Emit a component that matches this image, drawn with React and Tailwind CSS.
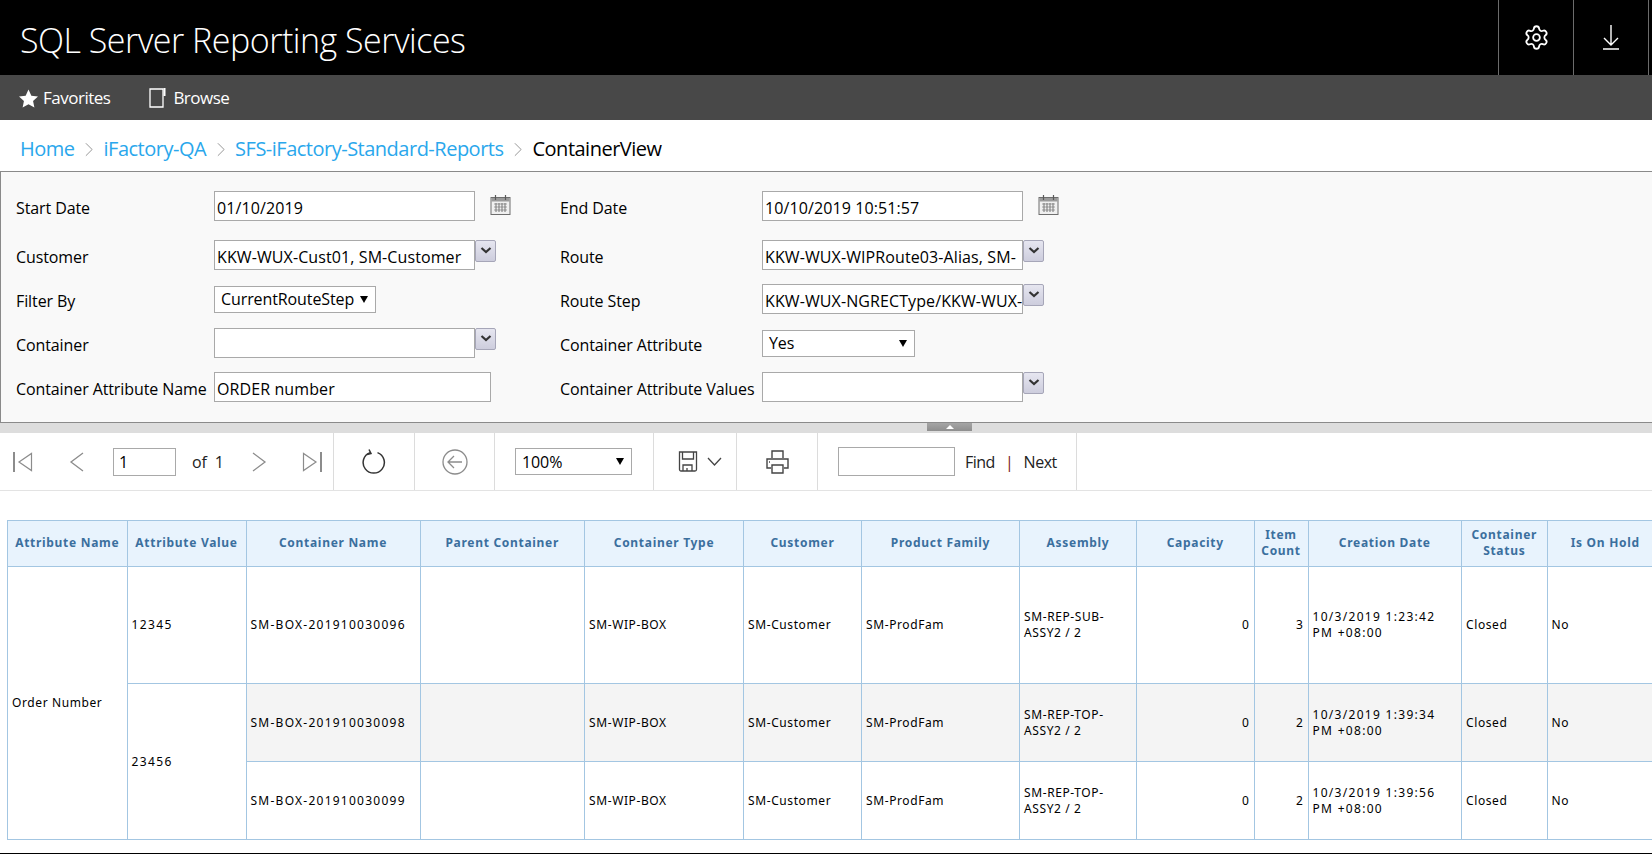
import React from 'react';
import { Settings } from 'lucide-react';

const cols = [119.5, 119, 174, 164.5, 159, 118, 158, 117, 117.5, 54, 153.5, 85.5, 116.5];

const rows = [
  { name: 'SM-BOX-201910030096', asm: 'SM-REP-SUB-', count: 3, date: '10/3/2019 1:23:42', h: 'h-[117px]', bg: 'bg-white' },
  { name: 'SM-BOX-201910030098', asm: 'SM-REP-TOP-', count: 2, date: '10/3/2019 1:39:34', h: 'h-[78px]', bg: 'bg-[#f4f4f4]' },
  { name: 'SM-BOX-201910030099', asm: 'SM-REP-TOP-', count: 2, date: '10/3/2019 1:39:56', h: 'h-[78px]', bg: 'bg-white' },
];

const th = 'border border-[#a3c6e2] bg-[#e8f3fd] px-1 pb-[2px] text-center align-middle font-bold text-[#3b6f9e] leading-[16px] tracking-[0.7px]';
const td = 'border border-[#a3c6e2] px-1 align-middle leading-[16px]';

function Calendar() {
  return (
    <svg viewBox="0 0 21 20" className="h-[20px] w-[21px]" aria-hidden="true">
      <rect x="1" y="2.5" width="19" height="17" fill="#f0f0f0" stroke="#6e6e6e" />
      <rect x="1.5" y="3" width="18" height="3.5" fill="#9a9a9a" />
      <path d="M5.5 0v5M15.5 0v5" stroke="#5a5a5a" strokeWidth="1.2" />
      <path d="M4 9h13M4 12h13M4 15h13" stroke="#a0a0a0" strokeWidth="1" />
      <path d="M6 8v9M9 8v9M12 8v9M15 8v9" stroke="#777" strokeWidth="1" />
    </svg>
  );
}

function Dropdown() {
  return (
    <button className="flex h-[22px] w-[21px] shrink-0 items-center justify-center rounded-[2px] border border-[#a6a6b8] bg-gradient-to-b from-[#e6e6f0] to-[#cdcddd]">
      <svg viewBox="0 0 12 7" className="mb-[1px] h-[7px] w-[12px]" aria-hidden="true">
        <path d="M1.5 1l4.5 4L10.5 1" fill="none" stroke="#333" strokeWidth="2.2" />
      </svg>
    </button>
  );
}

function Box({ value, w = 'w-[261px]' }) {
  return (
    <div className={`flex h-[30px] ${w} shrink-0 items-center overflow-hidden whitespace-nowrap border border-[#a9a9a9] bg-white pl-[2px] pt-[3px] text-[16px] tracking-[0.1px] text-black`}>
      {value}
    </div>
  );
}

function Select({ value, w }) {
  return (
    <div className={`flex h-[27px] ${w} shrink-0 items-center justify-between border border-[#a9a9a9] bg-white pl-[6px] pr-[7px] text-[16px] text-black`}>
      <span>{value}</span>
      <span className="h-0 w-0 border-x-[4px] border-t-[7px] border-x-transparent border-t-black" />
    </div>
  );
}

function FilterRow({ children }) {
  return <div className="flex h-[30px] items-center">{children}</div>;
}

function Left({ text, children }) {
  return (
    <div className="flex w-[544px] items-center">
      <span className="w-[198px] shrink-0 whitespace-nowrap pt-[3px] text-[16px] text-black">{text}</span>
      <div className="flex items-start">{children}</div>
    </div>
  );
}

function Right({ text, children }) {
  return (
    <div className="flex items-center">
      <span className="w-[202px] shrink-0 whitespace-nowrap pt-[3px] text-[16px] text-black">{text}</span>
      <div className="flex items-start">{children}</div>
    </div>
  );
}

function Sep({ w, className = '', children }) {
  return <div className={`flex h-full ${w} shrink-0 items-center border-r border-[#dcdcdc] ${className}`}>{children}</div>;
}

function Chevron() {
  return (
    <svg viewBox="0 0 9 16" className="mx-[10.5px] h-[15px] w-[8px]" fill="none" stroke="#8a8a8a" strokeWidth="1" aria-hidden="true">
      <path d="M1 1l7 7-7 7" />
    </svg>
  );
}

export default function App() {
  return (
    <div className="flex h-[854px] flex-col overflow-hidden bg-white font-['Open_Sans','Noto_Sans',sans-serif]">
      <header className="flex h-[75px] shrink-0 items-center justify-between bg-black pl-[20px] pr-[3px] text-white">
        <h1 className="pt-[6px] text-[34px] font-light tracking-[-0.5px]">SQL Server Reporting Services</h1>
        <div className="flex h-full">
          <div className="flex w-[76px] items-center justify-center border-x border-[#6b6b6b]">
            <Settings size={27} strokeWidth={1.6} />
          </div>
          <div className="flex w-[75px] items-center justify-center border-r border-[#6b6b6b]">
            <svg viewBox="0 0 16 25" className="h-[25px] w-[16px]" fill="none" stroke="white" strokeWidth="1.4" aria-hidden="true">
              <path d="M8 0v20M1 13l7 7 7-7M0 24h16" />
            </svg>
          </div>
        </div>
      </header>

      <nav className="flex h-[45px] shrink-0 items-center bg-[#484848] pl-[19px] pt-[1px] text-[17px] tracking-[-0.5px] text-white">
        <svg viewBox="0 0 20 19" className="h-[19px] w-[19px]" fill="white" aria-hidden="true">
          <path d="M10 0l3 6.6 7 .8-5.2 4.8 1.4 6.9L10 15.6l-6.2 3.5 1.4-6.9L0 7.4l7-.8z" />
        </svg>
        <span className="ml-[5px]">Favorites</span>
        <svg viewBox="0 0 17 20" className="ml-[39px] h-[20px] w-[17px]" fill="none" aria-hidden="true">
          <path d="M1 1h13v18H1z" stroke="white" strokeWidth="1.3" />
          <path d="M15.5 0v8" stroke="white" strokeWidth="2" />
        </svg>
        <span className="ml-[7px]">Browse</span>
      </nav>

      <div className="flex h-[51px] shrink-0 items-center pl-[20px] pt-[7px] text-[20px] tracking-[-0.5px] text-[#2aa7ec]">
        <span>Home</span>
        <Chevron />
        <span>iFactory-QA</span>
        <Chevron />
        <span>SFS-iFactory-Standard-Reports</span>
        <Chevron />
        <span className="text-black">ContainerView</span>
      </div>

      <section className="flex h-[252px] shrink-0 flex-col border-y border-l border-[#8a8a8a] bg-[#f9f9f9] pl-[15px] pt-[19px] tracking-[-0.1px]">
        <FilterRow>
          <Left text="Start Date">
            <Box value="01/10/2019" />
            <span className="ml-[15px] mt-[4px]"><Calendar /></span>
          </Left>
          <Right text="End Date">
            <Box value="10/10/2019 10:51:57" />
            <span className="ml-[15px] mt-[4px]"><Calendar /></span>
          </Right>
        </FilterRow>
        <div className="mt-[19px] flex flex-col gap-[14px]">
          <FilterRow>
            <Left text="Customer">
              <Box value="KKW-WUX-Cust01, SM-Customer" />
              <Dropdown />
            </Left>
            <Right text="Route">
              <Box value="KKW-WUX-WIPRoute03-Alias, SM-" />
              <Dropdown />
            </Right>
          </FilterRow>
          <FilterRow>
            <Left text="Filter By"><Select value="CurrentRouteStep" w="w-[162px]" /></Left>
            <Right text="Route Step">
              <Box value="KKW-WUX-NGRECType/KKW-WUX-" />
              <Dropdown />
            </Right>
          </FilterRow>
          <FilterRow>
            <Left text="Container">
              <Box value="" />
              <Dropdown />
            </Left>
            <Right text="Container Attribute"><Select value="Yes" w="w-[153px]" /></Right>
          </FilterRow>
          <FilterRow>
            <Left text="Container Attribute Name"><Box value="ORDER number" w="w-[277px]" /></Left>
            <Right text="Container Attribute Values">
              <Box value="" />
              <Dropdown />
            </Right>
          </FilterRow>
        </div>
      </section>

      <div className="flex h-[10px] shrink-0 items-start bg-[#dddddd] pl-[927px]">
        <button className="flex h-[8px] w-[45px] items-center justify-center bg-gradient-to-b from-[#a5a5a5] to-[#8e8e8e]">
          <span className="h-0 w-0 border-x-[4px] border-b-[4px] border-x-transparent border-b-white" />
        </button>
      </div>

      <div className="flex h-[58px] shrink-0 items-center border-b border-[#e3e3e3] text-[16px] tracking-[-0.1px] text-[#222]">
        <Sep w="w-[334px]" className="pl-[13px]">
          <svg viewBox="0 0 20 20" className="h-[20px] w-[20px]" fill="none" stroke="#8c8c8c" aria-hidden="true">
            <path d="M1 0v20" strokeWidth="2" />
            <path d="M18.5 1.5v17L6 10z" strokeWidth="1.2" />
          </svg>
          <svg viewBox="0 0 15 20" className="ml-[36px] h-[20px] w-[15px]" fill="none" stroke="#8c8c8c" strokeWidth="1.3" aria-hidden="true">
            <path d="M14 1L2 10l12 9" />
          </svg>
          <div className="ml-[29px] flex h-[28px] w-[63px] items-center border border-[#a9a9a9] pl-[5px] text-black">1</div>
          <span className="ml-[16px] flex w-[60px] gap-[8px]"><span>of</span><span>1</span></span>
          <svg viewBox="0 0 15 20" className="h-[20px] w-[15px]" fill="none" stroke="#8c8c8c" strokeWidth="1.3" aria-hidden="true">
            <path d="M1 1l12 9-12 9" />
          </svg>
          <svg viewBox="0 0 20 20" className="ml-[35px] h-[20px] w-[20px]" fill="none" stroke="#8c8c8c" aria-hidden="true">
            <path d="M19 0v20" strokeWidth="2" />
            <path d="M1.5 1.5v17L14 10z" strokeWidth="1.2" />
          </svg>
        </Sep>
        <Sep w="w-[81px]" className="justify-center">
          <svg viewBox="0 0 24 25" className="h-[25px] w-[24px]" fill="none" stroke="#333" strokeWidth="1.5" aria-hidden="true">
            <path d="M15.5 3.6a10.6 10.6 0 1 1-7.5 0" />
            <path d="M7 0.5l2 4-4 1" />
          </svg>
        </Sep>
        <Sep w="w-[80px]" className="justify-center">
          <svg viewBox="0 0 26 26" className="h-[26px] w-[26px]" fill="none" stroke="#8c8c8c" strokeWidth="1.3" aria-hidden="true">
            <circle cx="13" cy="13" r="12" />
            <path d="M20 13H6M12 7l-6 6 6 6" />
          </svg>
        </Sep>
        <Sep w="w-[159px]" className="pl-[20px]">
          <Select value="100%" w="w-[117px]" />
        </Sep>
        <Sep w="w-[83px]" className="pl-[24px]">
          <svg viewBox="0 0 20 21" className="h-[21px] w-[20px]" fill="none" stroke="#444" strokeWidth="1.3" aria-hidden="true">
            <path d="M1.5 1h17v17.5a1.5 1.5 0 0 1-1.5 1.5H3a1.5 1.5 0 0 1-1.5-1.5z" />
            <path d="M4.5 1v7h11V1M5 20v-6h9v6M9 20v-3" />
          </svg>
          <svg viewBox="0 0 15 9" className="ml-[9px] h-[9px] w-[15px]" fill="none" stroke="#444" strokeWidth="1.3" aria-hidden="true">
            <path d="M1 1l6.5 7L14 1" />
          </svg>
        </Sep>
        <Sep w="w-[81px]" className="justify-center">
          <svg viewBox="0 0 23 24" className="h-[24px] w-[23px]" fill="none" stroke="#444" strokeWidth="1.4" aria-hidden="true">
            <path d="M6 8V1h11v7M5 18H1V9h21v9h-4" />
            <path d="M6 15h11v8H6z" />
            <path d="M3 12h1" />
          </svg>
        </Sep>
        <Sep w="w-[259px]" className="pl-[20px]">
          <div className="h-[29px] w-[117px] border border-[#a9a9a9]" />
          <span className="ml-[10px] tracking-[-0.5px]">Find</span>
          <span className="ml-[10px] text-[#7a1a1a]">|</span>
          <span className="ml-[10px] tracking-[-0.5px]">Next</span>
        </Sep>
      </div>

      <div className="flex-1 overflow-hidden border-b border-black pl-[7px] pt-[29px] font-['Noto_Sans',sans-serif] text-[12px] tracking-[0.6px] text-black">
        <table className="w-[1656px] table-fixed border-collapse">
          <colgroup>
            {cols.map((c, i) => <col key={i} style={{ width: c }} />)}
          </colgroup>
          <thead>
            <tr className="h-[46px]">
              {['Attribute Name', 'Attribute Value', 'Container Name', 'Parent Container', 'Container Type', 'Customer', 'Product Family', 'Assembly', 'Capacity', 'Item Count', 'Creation Date', 'Container Status', 'Is On Hold'].map(h => (
                <th key={h} className={th}>{h}</th>
              ))}
            </tr>
          </thead>
          <tbody>
            {rows.map((r, i) => (
              <tr key={r.name} className={`${r.h} ${r.bg}`}>
                {i === 0 && <td rowSpan={3} className={`${td} bg-white`}>Order Number</td>}
                {i === 0 && <td className={`${td} bg-white tracking-[1.4px]`}>12345</td>}
                {i === 1 && <td rowSpan={2} className={`${td} bg-white tracking-[1.4px]`}>23456</td>}
                <td className={`${td} whitespace-nowrap tracking-[1.25px]`}>{r.name}</td>
                <td className={td}></td>
                <td className={td}>SM-WIP-BOX</td>
                <td className={td}>SM-Customer</td>
                <td className={td}>SM-ProdFam</td>
                <td className={td}>{r.asm}<br />ASSY2 / 2</td>
                <td className={`${td} text-right`}>0</td>
                <td className={`${td} text-right`}>{r.count}</td>
                <td className={`${td} whitespace-nowrap tracking-[1.3px]`}>{r.date}<br />PM +08:00</td>
                <td className={td}>Closed</td>
                <td className={td}>No</td>
              </tr>
            ))}
          </tbody>
        </table>
      </div>
    </div>
  );
}
